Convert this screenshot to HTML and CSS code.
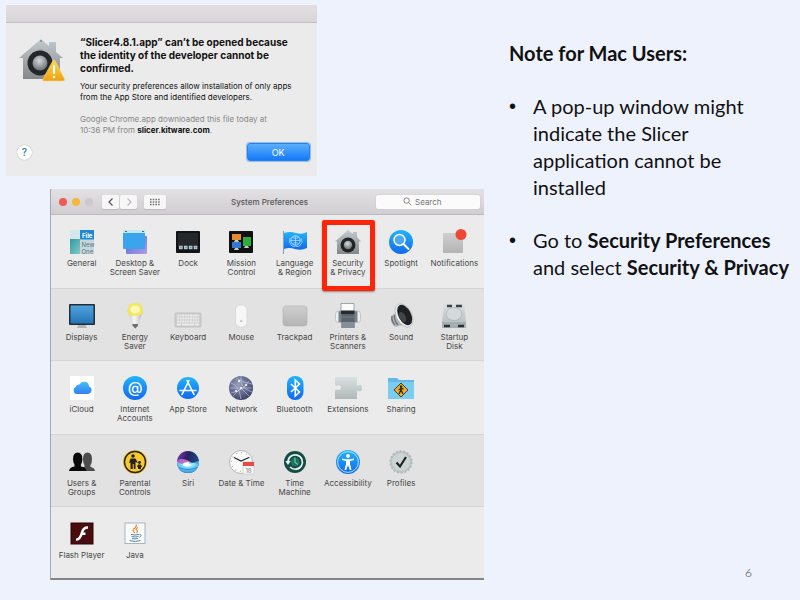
FILE: index.html
```html
<!DOCTYPE html>
<html lang="en">
<head>
    <meta charset="UTF-8">
    <meta name="viewport" content="width=device-width, initial-scale=1.0">
    <title>Note for Mac Users</title>
    <link rel="stylesheet" href="styles.css">
</head>
<body>
    <!-- shared gradients -->
    <svg class="defs" aria-hidden="true">
        <defs>
            <linearGradient id="blue" x1="0" y1="0" x2="0" y2="1"><stop offset="0" stop-color="#22b4fb"/><stop offset="1" stop-color="#1268ee"/></linearGradient>
            <linearGradient id="metal" x1="0" y1="0" x2="0" y2="1"><stop offset="0" stop-color="#c3cbce"/><stop offset="1" stop-color="#85888b"/></linearGradient>
            <linearGradient id="grey" x1="0" y1="0" x2="0" y2="1"><stop offset="0" stop-color="#cfcfcf"/><stop offset="1" stop-color="#b4b4b4"/></linearGradient>
            <linearGradient id="pale" x1="0" y1="0" x2="0" y2="1"><stop offset="0" stop-color="#dbe0e0"/><stop offset="1" stop-color="#afb9ba"/></linearGradient>
            <linearGradient id="teal" x1="0" y1="0" x2="1" y2="1"><stop offset="0" stop-color="#2f98a0"/><stop offset="1" stop-color="#8acbc8"/></linearGradient>
            <linearGradient id="purple" x1="0" y1="0" x2="1" y2="1"><stop offset="0" stop-color="#4168d8"/><stop offset="1" stop-color="#b79be4"/></linearGradient>
            <linearGradient id="screen" x1="0" y1="0" x2="0" y2="1"><stop offset="0" stop-color="#4fa3dc"/><stop offset="1" stop-color="#2575b8"/></linearGradient>
            <linearGradient id="warn" x1="0" y1="0" x2="0" y2="1"><stop offset="0" stop-color="#ffd84d"/><stop offset="1" stop-color="#efa010"/></linearGradient>
            <linearGradient id="bulb" x1="0" y1="0" x2="1" y2="0"><stop offset="0" stop-color="#c2c3c6"/><stop offset=".45" stop-color="#f6f6f6"/><stop offset="1" stop-color="#b2b3b7"/></linearGradient>
            <linearGradient id="siri" x1="0" y1="0" x2="1" y2=".3"><stop offset="0" stop-color="#8a35b5"/><stop offset=".5" stop-color="#27205f"/><stop offset="1" stop-color="#1b4a86"/></linearGradient>
            <radialGradient id="globe" cx=".4" cy=".35" r=".7"><stop offset="0" stop-color="#9aa2c4"/><stop offset="1" stop-color="#383f63"/></radialGradient>
            <radialGradient id="knob" cx=".45" cy=".35" r=".7"><stop offset="0" stop-color="#d4dade"/><stop offset="1" stop-color="#65696d"/></radialGradient>
            <radialGradient id="wave" cx=".5" cy=".3" r=".7"><stop offset="0" stop-color="#fff"/><stop offset=".5" stop-color="#6fd8f5"/><stop offset="1" stop-color="#3a8fe0"/></radialGradient>
        </defs>
    </svg>

    <main class="slide">
        <div class="shots">
            <section class="dialog">
                <div class="dialog-bar"></div>
                <div class="dialog-body">
                    <svg class="dialog-icon" viewBox="0 0 48 46" aria-hidden="true">
                        <path d="M23 1 L31 8 V4 H38 V14 L45 20 H42 V41 H5 V20 H1Z" fill="url(#metal)"/>
                        <circle cx="23" cy="3" r="1" fill="#7f8b91"/><path d="M21 12h4" stroke="#8c979b"/>
                        <circle cx="22" cy="25" r="12.500" fill="#24272a"/><circle cx="22" cy="25" r="7.500" fill="url(#knob)"/>
                        <path d="M35 22.500 Q36 21.500 37 22.500 L46.500 41 Q47 43 45 43 H26 Q24 43 25 41Z" fill="url(#warn)" stroke="#f6d681" stroke-width=".6"/>
                        <path d="M36 28v7" stroke="#fff" stroke-width="2.200" stroke-linecap="round"/><circle cx="36" cy="39" r="1.300" fill="#fff"/>
                    </svg>
                    <div class="dialog-text">
                        <h2>“Slicer4.8.1.app” can’t be opened because the identity of the developer cannot be confirmed.</h2>
                        <p>Your security preferences allow installation of only apps from the App Store and identified developers.</p>
                        <p class="source">Google Chrome.app downloaded this file today at<br>10:36 PM from <b>slicer.kitware.com</b>.</p>
                    </div>
                </div>
                <div class="dialog-actions">
                    <button class="help" type="button" aria-label="Help">?</button>
                    <button class="ok" type="button">OK</button>
                </div>
            </section>

            <section class="prefs">
                <div class="toolbar">
                    <div class="tools">
                        <span class="dot red"></span>
                        <span class="dot yellow"></span>
                        <span class="dot off"></span>
                        <div class="nav">
                            <button type="button" aria-label="Back"><svg viewBox="0 0 8 10"><path d="M5.500 1.500 2 5l3.500 3.500" fill="none" stroke="#555" stroke-width="1.200"/></svg></button>
                            <button type="button" aria-label="Forward"><svg viewBox="0 0 8 10"><path d="M2.500 1.500 6 5 2.500 8.500" fill="none" stroke="#bbb" stroke-width="1.200"/></svg></button>
                        </div>
                        <button class="all" type="button" aria-label="Show all"><svg viewBox="0 0 12 8"><path d="M1 1.500h10M1 4h10M1 6.500h10" stroke="#777" stroke-width="1.400" stroke-dasharray="1.600 1.100"/></svg></button>
                    </div>
                    <h3>System Preferences</h3>
                    <label class="search">
                        <svg viewBox="0 0 10 10" aria-hidden="true"><circle cx="4" cy="4" r="3" fill="none" stroke="#777"/><path d="m6.300 6.300 3 3" stroke="#777"/></svg>
                        <input type="text" placeholder="Search" aria-label="Search">
                    </label>
                </div>

                <div class="row">
                    <button class="item" type="button">
                        <svg viewBox="0 0 28 28"><rect x="2" y="2" width="11" height="10" fill="#d5e7e9"/><rect x="12" y="2" width="14" height="10" fill="#2087d6"/><rect x="2" y="11" width="11" height="15" fill="url(#teal)"/><rect x="12" y="11.500" width="14" height="14.500" fill="#c8d6db"/><text class="glyph" x="14" y="9.500" fill="#fff" font-weight="700">File</text><text class="glyph" x="13.500" y="18.500" fill="#578">New</text><text class="glyph" x="13.500" y="25.500" fill="#578">One</text></svg>
                        General</button>
                    <button class="item" type="button">
                        <svg viewBox="0 0 28 28"><rect x="5" y="8" width="21" height="18" rx="1" fill="url(#purple)"/><rect x="2" y="2" width="22" height="19" rx="1" fill="#3aa4ee"/><path d="M2 2h22v3H2z" fill="#c4e6f0"/><path d="M4 3.500h2M21 3.500h2" stroke="#376" stroke-width="1.200"/></svg>
                        Desktop &amp; Screen Saver</button>
                    <button class="item" type="button">
                        <svg viewBox="0 0 28 28"><rect x="2" y="3" width="24" height="22" rx="1" fill="#111315"/><rect x="4" y="5" width="20" height="14" fill="#24282a"/><path d="M5 19.500h19" stroke="#b7cad5" stroke-width="3.500" stroke-dasharray="3.700 1.200"/><path d="M6.500 19.500h17" stroke="#587486" stroke-width="1.300" stroke-dasharray="1 3.900"/></svg>
                        Dock</button>
                    <button class="item" type="button">
                        <svg viewBox="0 0 28 28"><rect x="2" y="3" width="24" height="22" rx="1" fill="#111"/><rect x="5" y="6" width="9" height="6" fill="#e88a32"/><rect x="5" y="14" width="9" height="6" fill="#3478d4"/><rect x="16" y="9" width="8" height="9" fill="#2cad3d"/><path d="M8 12h3l1 2H7zM8 20h3l1 2H7zM18 18h3l1 2h-5z" fill="#bfc9cc"/></svg>
                        Mission Control</button>
                    <button class="item" type="button">
                        <svg viewBox="0 0 28 28"><path d="M2.500 3v23" stroke="#8ba3b1" stroke-width="1.200"/><path d="M3 5q6-2 12 0t11-1v16q-6 3-12 1T3 21z" fill="url(#blue)"/><circle cx="14.500" cy="12.500" r="4.700" fill="none" stroke="#b9e2fb" stroke-width="1"/><path d="M10 12.500h9M14.500 8v9M11.500 9.500q3 2 6 0M11.500 15.500q3-2 6 0M9 10q-2 5 2 8 3 1 3.500 0 1 1 4 0 4-3 2-8" fill="none" stroke="#b9e2fb" stroke-width=".7"/></svg>
                        Language &amp;&nbsp;Region</button>
                    <button class="item chosen" type="button">
                        <svg viewBox="0 0 28 28"><path d="M14 2 L19 6 V4 H23 V9 L27 13.500 H25 V26 H3 V13.500 H1Z" fill="url(#metal)"/><circle cx="14" cy="17" r="7.500" fill="#222527"/><circle cx="14" cy="17" r="4.200" fill="url(#knob)"/></svg>
                        Security &amp;&nbsp;Privacy</button>
                    <button class="item" type="button">
                        <svg viewBox="0 0 28 28"><circle cx="14" cy="14" r="12" fill="url(#blue)"/><circle cx="12.500" cy="12" r="5.500" fill="#49a8f6" stroke="#fff" stroke-width="1.500"/><path d="m16.500 16 5 5" stroke="#fff" stroke-width="2" stroke-linecap="round"/></svg>
                        Spotlight</button>
                    <button class="item" type="button">
                        <svg viewBox="0 0 28 28"><rect x="3" y="5" width="20" height="20" rx="1" fill="url(#grey)"/><circle cx="21" cy="6.500" r="5.500" fill="#ee4738"/></svg>
                        Notifications</button>
                </div>

                <div class="row shade">
                    <button class="item" type="button">
                        <svg viewBox="0 0 28 28"><path d="M11 22h6l2 4H9z" fill="#b1b4b6"/><rect x="1" y="2" width="26" height="21" rx="1" fill="#202d37"/><rect x="2.500" y="3.500" width="23" height="18" fill="url(#screen)"/></svg>
                        Displays</button>
                    <button class="item" type="button">
                        <svg viewBox="0 0 28 28"><path d="M11 20h6.500l-.7 4-2.500 2.500-2.600-2.500z" fill="#6c7075"/><path d="M6.500 8.500h15.500q0 3-2 6l-2.500 7.500h-6.500L8.500 14.500q-2-3-2-6z" fill="url(#bulb)"/><path d="M6.500 8.500q0-7.500 7.700-7.500T22 8.500q0 2-.8 4-7 2.500-14 0-.7-2-.7-4z" fill="#f4e565"/><ellipse cx="14.200" cy="7.500" rx="5" ry="4" fill="#fff9b4"/></svg>
                        Energy<br>Saver</button>
                    <button class="item" type="button">
                        <svg viewBox="0 0 28 28"><rect x="1" y="11" width="26" height="14" rx="1" fill="#cdcdcd" stroke="#b7b7b7" stroke-width=".7"/><path d="M3 13.500h22M3 16.500h22M3 19.500h22" stroke="#ececec" stroke-width="2" stroke-dasharray="2 .6"/><path d="M3 22.500h4M8 22.500h12M21 22.500h4" stroke="#ececec" stroke-width="2"/></svg>
                        Keyboard</button>
                    <button class="item" type="button">
                        <svg viewBox="0 0 28 28"><rect x="8.500" y="3" width="11.500" height="22" rx="5" fill="#f7f7f7" stroke="#d3d3d3" stroke-width=".7"/><circle cx="14.200" cy="19" r="1.300" fill="#ccc"/></svg>
                        Mouse</button>
                    <button class="item" type="button">
                        <svg viewBox="0 0 28 28"><rect x="2" y="4" width="24" height="20" rx="3" fill="url(#grey)" stroke="#b0b0b0" stroke-width=".6"/></svg>
                        Trackpad</button>
                    <button class="item" type="button">
                        <svg viewBox="0 0 28 28"><rect x="1.500" y="9" width="25" height="11.500" rx="3" fill="#eceef0" stroke="#a9aeb4" stroke-width=".6"/><path d="M4.500 9.200h19v11h-19z" fill="#79828b"/><path d="M7 1.500h13v8H7z" fill="#fafafa" stroke="#7f858c" stroke-width=".7"/><path d="M7 8.500h13.500V12H7z" fill="#272b30"/><path d="M7.500 12h13v14h-13z" fill="#5a626b"/><path d="M7.500 20h13v6h-13z" fill="#868f98"/><path d="M7.500 15h13" stroke="#77808a"/></svg>
                        Printers &amp; Scanners</button>
                    <button class="item" type="button">
                        <svg viewBox="0 0 28 28"><path d="M4 15q0-2 3-3l6-6 6 17-8 1q-1 2-4 0-4-4-3-9z" fill="#b4b7ba"/><path d="M5 14q-1 5 3 9M7.500 13q-1 5 3.500 10" fill="none" stroke="#686c70" stroke-width="1.200"/><ellipse cx="17" cy="13.500" rx="7.700" ry="12.500" transform="rotate(-28 17 13.500)" fill="#eeeff0" stroke="#9b9ea1" stroke-width=".5"/><ellipse cx="17.700" cy="13" rx="6.200" ry="11" transform="rotate(-28 17.700 13)" fill="#1f2123"/><ellipse cx="15.500" cy="15" rx="3" ry="5.500" transform="rotate(-28 15.500 15)" fill="#424548"/></svg>
                        Sound</button>
                    <button class="item" type="button">
                        <svg viewBox="0 0 28 28"><path d="M4 2h20l2 18v6H2v-6z" fill="url(#pale)"/><path d="M7 4h5M16 4h6" stroke="#3c4245" stroke-width="2.500"/><ellipse cx="14" cy="12" rx="8" ry="6.500" fill="#d4dadb" stroke="#a5afb2" stroke-width=".7"/><path d="M2 20h24v6H2z" fill="#a5afb2"/><path d="M4 24h6M18 24h6" stroke="#2c3033" stroke-width="2.500"/></svg>
                        Startup<br>Disk</button>
                </div>

                <div class="row">
                    <button class="item" type="button">
                        <svg viewBox="0 0 28 28"><rect x="2" y="2" width="24" height="24" rx="1" fill="#fff"/><path d="M8 20a4 4 0 0 1-.5-7q1-3 4-2.500a5 5 0 0 1 9.500 2q3 1 2.500 4T20 20z" fill="url(#blue)" opacity=".85"/></svg>
                        iCloud</button>
                    <button class="item" type="button">
                        <svg viewBox="0 0 28 28"><circle cx="14" cy="14" r="12" fill="url(#blue)"/><text class="at" x="14" y="19" fill="#fff" text-anchor="middle">@</text></svg>
                        Internet Accounts</button>
                    <button class="item" type="button">
                        <svg viewBox="0 0 28 28"><circle cx="14" cy="14" r="11" fill="url(#blue)"/><path d="M13 6.500 20 20.500M15 6.500 8 20.500M6 16.500h16" stroke="#fff" stroke-width="1.600" stroke-linecap="round"/></svg>
                        App Store</button>
                    <button class="item" type="button">
                        <svg viewBox="0 0 28 28"><circle cx="14" cy="14" r="12" fill="url(#globe)"/><path d="M4 9q8 2 10 16M9 4q8 5 16 6M4 19q12-2 18-12M14 2q-2 12 11 16M6 22l8-8 8 8M3 14h22" fill="none" stroke="#ccd2e6" stroke-width=".6"/><path d="m14 14 .1 0M9 17h.1M19 11h.1M12 7h.1" stroke="#fff" stroke-width="2" stroke-linecap="round"/></svg>
                        Network</button>
                    <button class="item" type="button">
                        <svg viewBox="0 0 28 28"><rect x="6" y="2" width="16.500" height="24" rx="8" fill="url(#blue)"/><path d="m10 10 8.500 8-4.200 4V6l4.200 4L10 18" fill="none" stroke="#fff" stroke-width="1.600"/></svg>
                        Bluetooth</button>
                    <button class="item" type="button">
                        <svg viewBox="0 0 28 28"><path d="M1 3h22v8q1 1 2 0 3-1 3 3t-3 3q-1-1-2 0v8H1v-9q2-1 3 0 3 0 3-2.500T4 11q-1 2-3 0z" fill="url(#pale)"/></svg>
                        Extensions</button>
                    <button class="item" type="button">
                        <svg viewBox="0 0 28 28"><path d="M1 4h9l2 2h15v19H1z" fill="#62b9e3"/><path d="M1 8h26v17H1z" fill="#7accf0"/><path d="m14 9 7 7-7 7-7-7z" fill="#e9ae2e" stroke="#4d4023"/><circle cx="14" cy="12.500" r="1.200" fill="#332a16"/><path d="m14 13 0 3-2 4M14 16l2 4M11.500 15.500l5-1" stroke="#332a16" stroke-width="1.300"/></svg>
                        Sharing</button>
                </div>

                <div class="row shade">
                    <button class="item" type="button">
                        <svg viewBox="0 0 28 28"><path d="M13 23v-4h3.500v-2q-1.500-2-1.500-6 0-6.500 4.500-6.500T24 11q0 4-1.500 6v2q4 .5 4.500 4z" fill="#4c4c4c"/><path d="M1 23q.5-4 5.500-4.500v-2Q5 15 5 11q0-6.500 4.700-6.500t4.700 6.500q0 4-1.500 5.500v2q5 .5 5.500 4.500z" fill="#0a0a0a"/></svg>
                        Users &amp; Groups</button>
                    <button class="item" type="button">
                        <svg viewBox="0 0 28 28"><circle cx="14" cy="14" r="12" fill="#f1bd21"/><circle cx="14" cy="14" r="10.500" fill="#f8cb2b" stroke="#292516" stroke-width="1.400"/><circle cx="12" cy="8" r="1.800" fill="#222"/><path d="M9.500 10.500h5L17 15l-2.500-1V21h-1.800v-5h-1v5H9.500v-6.500L8 15z" fill="#222"/><circle cx="18.500" cy="14.500" r="1.400" fill="#222"/><path d="M17 16.500h3l1 2.500h-1v2h-3v-2h-1z" fill="#222"/></svg>
                        Parental Controls</button>
                    <button class="item" type="button">
                        <svg viewBox="0 0 28 28"><circle cx="14" cy="14" r="11" fill="url(#siri)"/><path d="M3 14q1-3 5-3 6 1 10 4l7-2q0 12-11 12T3 14z" fill="url(#wave)"/><path d="M3.200 12.500Q9 9 17 14q-7 0-9 2-4-1-4.800-3.500z" fill="#c93fb4" opacity=".7"/><ellipse cx="13" cy="16.500" rx="4" ry="2" fill="#fff" opacity=".85"/><path d="M5 19.500q9 4 18 0M15 15q5-1 9 0" fill="none" stroke="#2a7ec8" stroke-width=".8"/></svg>
                        Siri</button>
                    <button class="item" type="button">
                        <svg viewBox="0 0 28 28"><circle cx="14" cy="14" r="11.500" fill="#fafafa" stroke="#b5b7b9"/><circle cx="14" cy="14" r="9.500" fill="none" stroke="#999" stroke-width="1.200" stroke-dasharray=".7 4.270"/><path d="M7 9.500 14 13l8-3.500" fill="none" stroke="#262626" stroke-width="1.300"/><rect x="16" y="14" width="11" height="12" fill="#f5f5f5" stroke="#bbb" stroke-width=".5"/><path d="M16 14h11v4H16z" fill="#e54d44"/><text class="glyph" x="21.500" y="25" fill="#888" text-anchor="middle">18</text></svg>
                        Date &amp;&nbsp;Time</button>
                    <button class="item" type="button">
                        <svg viewBox="0 0 28 28"><circle cx="14" cy="14" r="11" fill="#164b46"/><circle cx="14" cy="14" r="4.500" fill="#1f6e61"/><path d="M7 14a7.200 7.200 0 1 1 2 5" fill="none" stroke="#e7f1ec" stroke-width="1.700"/><path d="m4.300 13h5.400L7 17z" fill="#e7f1ec"/><path d="M14 9.500v5l3 2" fill="none" stroke="#57d0a1" stroke-width="1.200"/></svg>
                        Time Machine</button>
                    <button class="item" type="button">
                        <svg viewBox="0 0 28 28"><circle cx="14" cy="14" r="12" fill="url(#blue)"/><circle cx="14" cy="14" r="10.400" fill="none" stroke="#b5defc"/><circle cx="14" cy="8" r="1.900" fill="#fff"/><path d="M8 10.500l4 .7h4l4-.7v1.500l-4 1v3l1.500 6h-1.700L14 17l-1.800 5h-1.700l1.500-6v-3l-4-1z" fill="#fff"/></svg>
                        Accessibility</button>
                    <button class="item" type="button">
                        <svg viewBox="0 0 28 28"><circle cx="14" cy="14" r="10.700" fill="#bdc6c7" stroke="#b1babb" stroke-width="2" stroke-dasharray="2.200 1.530"/><circle cx="14" cy="14" r="9" fill="#ccd4d4"/><path d="m9.500 14.500 3.500 4 6-9.500" fill="none" stroke="#222" stroke-width="2.200"/></svg>
                        Profiles</button>
                </div>

                <div class="row last">
                    <button class="item" type="button">
                        <svg viewBox="0 0 28 28"><rect x="3" y="3" width="22" height="21" fill="#490d10" stroke="#2d0708"/><path d="M20 7.500q-4.500-.3-6 5-2 7.500-6 7M12.500 13.700h5" fill="none" stroke="#fff" stroke-width="2.600"/></svg>
                        Flash Player</button>
                    <button class="item" type="button">
                        <svg viewBox="0 0 28 28"><rect x="4" y="3" width="20" height="20.500" fill="#fafafa" stroke="#a9b4bf"/><path d="M14 13q-4-3 0-5 2-2 1-3.500M15.500 13q2-2-.5-3.500 0-1.500 2-2" fill="none" stroke="#e7892f" stroke-width="1.200"/><path d="M10 14.500q4 1 8 0M10.500 16.500q4 1 7 0M11 18.500q3 1 6 0M8.500 20.500q6 2 11 0M18.500 14.500q3 0 0 3" fill="none" stroke="#5484a7" stroke-width="1"/></svg>
                        Java</button>
                </div>
            </section>
        </div>

        <aside class="note">
            <h1>Note for Mac Users:</h1>
            <ul>
                <li>A pop-up window might indicate the Slicer<br>application cannot be<br>installed</li>
                <li>Go to <b>Security Preferences</b> and select <b>Security &amp; Privacy</b></li>
            </ul>
            <span class="page-number">6</span>
        </aside>
    </main>
</body>
</html>
```
FILE: styles.css
```css
* {
    box-sizing: border-box;
}
body {
    margin: 0;
    background-color: #eef2fd;
    color: #111;
    font-family: Inter, "Liberation Sans", sans-serif;
}
h1, h2, h3, p, ul {
    margin: 0;
    padding: 0;
}
button {
    padding: 0;
    border: none;
    background: none;
    font-family: inherit;
    color: inherit;
}
.defs {
    position: absolute;
    width: 0;
    height: 0;
}
.slide {
    display: grid;
    grid-template-columns: 121fr 79fr;
    min-height: 100vh;
}
.shots {
    padding: 5px 0 20px 6px;
}

/* security warning */
.dialog {
    width: 65%;
    background-color: #ebebeb;
}
.dialog-bar {
    height: 18px;
    background: linear-gradient(#e2dee2, #d9d6d9);
    border-bottom: 1px solid #c2c0c2;
}
.dialog-body {
    display: flex;
    gap: 14px;
    padding: 13px 16px 0 12px;
}
.dialog-icon {
    flex: none;
    width: 48px;
    height: 46px;
    margin-top: 2px;
}
.dialog-text {
    font-size: 8px;
    line-height: 11px;
}
.dialog-text h2 {
    margin-bottom: 6px;
    font-size: 10px;
    line-height: 13px;
    font-weight: 700;
}
.dialog-text .source {
    margin-top: 11px;
    color: #888;
}
.dialog-text b {
    color: #111;
}
.dialog-actions {
    display: flex;
    justify-content: space-between;
    align-items: center;
    padding: 7px 7px 15px 11px;
}
.help {
    width: 15px;
    height: 15px;
    border-radius: 50%;
    background-color: #fff;
    box-shadow: 0 0 1px #888;
    color: #2a7ab8;
    font-size: 10px;
    line-height: 15px;
    font-weight: 500;
}
.ok {
    width: 63px;
    height: 18px;
    border: 1px solid #2a7fdf;
    border-radius: 3px;
    background: linear-gradient(#5cb0fb, #1479f8);
    box-shadow: 0 0 1px 1px #8dbdf0;
    color: #fff;
    font-size: 9px;
}

/* preferences window */
.prefs {
    margin: 13px 0 0 44px;
    border-left: 1px solid #a5a8b0;
    border-bottom: 2px solid #858589;
    background-color: #ebebeb;
}
.toolbar {
    display: grid;
    grid-template-columns: 1fr auto 1fr;
    align-items: center;
    height: 26px;
    padding: 0 4px 0 8px;
    background: linear-gradient(#e3e1e3, #d0ced0);
    border-bottom: 1px solid #bcbabc;
}
.tools {
    display: flex;
    align-items: center;
    gap: 5px;
}
.dot {
    width: 8px;
    height: 8px;
    border-radius: 50%;
}
.red {
    background-color: #ee5a55;
}
.yellow {
    background-color: #f5b83a;
}
.off {
    background-color: #cbc9cb;
}
.nav {
    display: flex;
    gap: 1px;
    margin-left: 4px;
}
.tools button {
    display: flex;
    align-items: center;
    justify-content: center;
    width: 17px;
    height: 14px;
    border-radius: 2px;
    background-color: #f8f7f8;
    box-shadow: 0 1px 1px #bbb;
}
.tools .all {
    width: 22px;
    margin-left: 2px;
}
.nav svg {
    width: 8px;
    height: 10px;
}
.all svg {
    width: 12px;
    height: 8px;
}
.toolbar h3 {
    color: #555;
    font-size: 8px;
    font-weight: 500;
}
.search {
    display: flex;
    align-items: center;
    justify-content: center;
    justify-self: end;
    gap: 3px;
    width: 104px;
    height: 14px;
    padding-right: 10px;
    border-radius: 2px;
    background-color: #fbfbfb;
    box-shadow: 0 0 1px #aaa;
}
.search svg {
    width: 9px;
    height: 9px;
}
.search input {
    width: 28px;
    padding: 0;
    border: none;
    outline: none;
    background: none;
    font-family: inherit;
    font-size: 8px;
}
.search input::placeholder {
    color: #777;
}
.row {
    display: grid;
    grid-template-columns: repeat(8, 1fr);
    min-height: 73px;
    padding: 0 3px 0 4px;
}
.shade {
    background-color: #e2e2e2;
    border-top: 1px solid #d4d4d4;
    border-bottom: 1px solid #d4d4d4;
}
.last {
    min-height: 71px;
}
.item {
    position: relative;
    display: block;
    padding-top: 13px;
    color: #484848;
    font-size: 8px;
    line-height: 9px;
    text-align: center;
    align-self: start;
}
.item svg {
    display: block;
    width: 28px;
    height: 28px;
    margin: 0 auto 3px;
}
.chosen::after {
    content: "";
    position: absolute;
    top: 5px;
    right: 0;
    bottom: -14px;
    left: 1px;
    border: 5px solid #fb2509;
    border-radius: 2px;
    box-shadow: 0 1px 2px rgba(0, 0, 0, 0.4);
    z-index: 1;
}
.glyph {
    font-size: 6px;
}
.at {
    font-size: 15px;
    font-weight: 500;
}

/* slide text */
.note {
    display: flex;
    flex-direction: column;
    padding: 40px 8px 17px 25px;
    font-family: Lato, "Liberation Sans", sans-serif;
    font-size: 20px;
    line-height: 27px;
}
.note h1 {
    font-size: 20px;
    font-weight: 700;
}
.note ul {
    padding-left: 24px;
    list-style: none;
}
.note li {
    position: relative;
    margin-top: 26px;
}
.note li::before {
    content: "•";
    position: absolute;
    left: -24px;
    font-family: "Liberation Sans", sans-serif;
}
.page-number {
    margin-top: auto;
    padding-right: 40px;
    color: #8b8d94;
    font-size: 12px;
    line-height: 20px;
    text-align: right;
}
```
